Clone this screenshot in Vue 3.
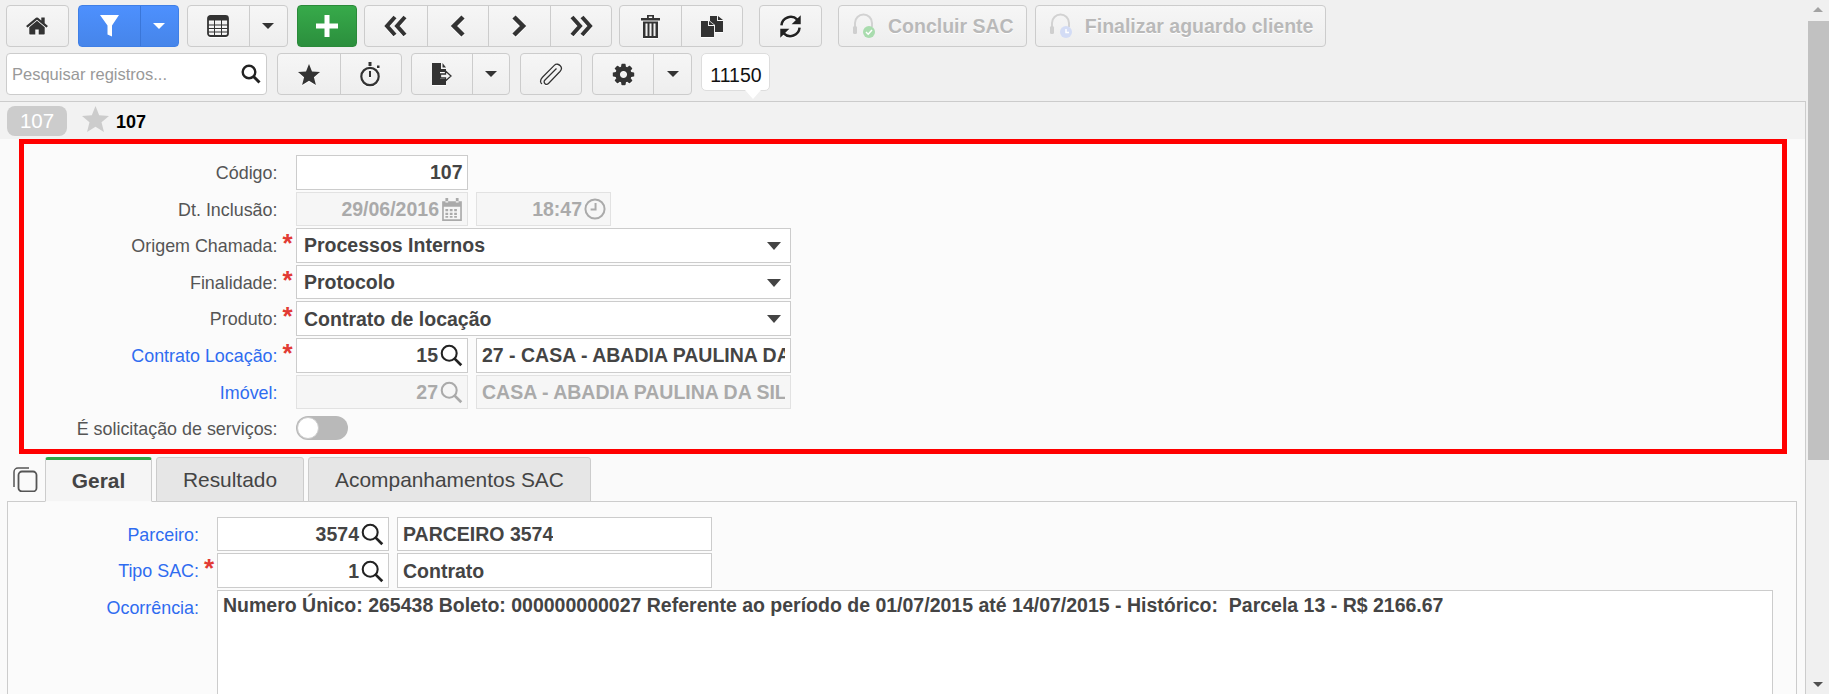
<template>
  <div class="app">
    <div class="main">
      <div class="toolbar">
        <div class="tool-row">
          <div class="group g-home">
            <button class="btn w62">
              <svg class="ico" width="24" height="24" viewBox="0 0 1792 1792"><path d="M1472 992v480q0 26-19 45t-45 19h-384v-384h-256v384h-384q-26 0-45-19t-19-45v-480q0-1 .5-3t.5-3l575-474 575 474q1 2 1 6zm223-69l-62 74q-8 9-21 11h-3q-13 0-21-7l-692-577-692 577q-12 8-24 7-13-2-21-11l-62-74q-8-10-7-23.500t11-21.500l719-599q32-26 76-26t76 26l244 204v-195q0-14 9-23t23-9h192q14 0 23 9t9 23v408l219 182q10 8 11 21.500t-7 23.500z"/></svg>
            </button>
          </div>
          <div class="group blue g-filter">
            <button class="btn w62">
              <svg width="19" height="22" viewBox="0 0 19 22"><path d="M0 0h19l-7 10.500v11l-4.500-2v-9z" fill="#fff"/></svg>
            </button>
            <button class="btn w39"><span class="caret white"></span></button>
          </div>
          <div class="group g-table">
            <button class="btn w62">
              <svg class="ico" width="22" height="22" viewBox="0 0 22 22"><rect x="1" y="1" width="20" height="20" rx="2.500" fill="none" stroke="#333" stroke-width="1.800"/><rect x="1" y="1" width="20" height="4.500" fill="#333"/><path d="M1 10h20M1 13.500h20M1 17h20M7.500 5v16M14.500 5v16" stroke="#333" stroke-width="1"/></svg>
            </button>
            <button class="btn w39"><span class="caret"></span></button>
          </div>
          <div class="group green g-add">
            <button class="btn w60">
              <svg width="22" height="22" viewBox="0 0 22 22"><path d="M8.500 0h5v8.500H22v5h-8.500V22h-5v-8.500H0v-5h8.500z" fill="#fff"/></svg>
            </button>
          </div>
          <div class="group g-nav">
            <button class="btn n1">
              <svg class="ico" width="24" height="22" viewBox="0 0 24 22"><path d="M11 2 3 11l8 9M21 2l-8 9 8 9" fill="none" stroke="#333" stroke-width="4"/></svg>
            </button>
            <button class="btn n2">
              <svg class="ico" width="15" height="22" viewBox="0 0 15 22"><path d="M13 2 4 11l9 9" fill="none" stroke="#333" stroke-width="4.500"/></svg>
            </button>
            <button class="btn n3">
              <svg class="ico" width="15" height="22" viewBox="0 0 15 22"><path d="m2 2 9 9-9 9" fill="none" stroke="#333" stroke-width="4.500"/></svg>
            </button>
            <button class="btn n4">
              <svg class="ico" width="24" height="22" viewBox="0 0 24 22"><path d="m3 2 8 9-8 9M13 2l8 9-8 9" fill="none" stroke="#333" stroke-width="4"/></svg>
            </button>
          </div>
          <div class="group g-trash">
            <button class="btn w61">
              <svg class="ico" width="19" height="24" viewBox="0 0 19 24"><path d="M0 4h19v2.500H0zM6 4V1h7v3h-1.800V2.500H7.800V4zM2 7.500h15V24H2zm2.500 2v12.500h2V9.500zm4 0v12.500h2V9.500zm4 0v12.500h2V9.500z" fill="#333" fill-rule="evenodd"/></svg>
            </button>
            <button class="btn w61">
              <svg class="ico" width="22" height="22" viewBox="0 0 22 22"><path d="M0 6h7v5h6v11H0zM8 6l5 4H8zM9 1h7v5h6v11h-8v-7l-5-4zm8 0 5 4h-5z" fill="#333"/></svg>
            </button>
          </div>
          <div class="group g-refresh">
            <button class="btn w62">
              <svg class="ico" width="25" height="25" viewBox="0 0 22 22"><path d="M3 10a8.200 8.200 0 0 1 14-5M19 12a8.200 8.200 0 0 1-14 5" fill="none" stroke="#222" stroke-width="2.200"/><path d="M20 1v8h-8zM2 21v-8h8z" fill="#222"/></svg>
            </button>
          </div>
          <div class="group g-sac">
            <button class="btn text-btn w187" disabled>
              <svg width="24" height="26" viewBox="0 0 24 26"><path d="M3 15V10a8.500 8.500 0 0 1 17 0v4" fill="none" stroke="#d2d2d2" stroke-width="2"/><rect x="1" y="13" width="4" height="8" rx="1.500" fill="#cfcfcf"/><circle cx="17" cy="19" r="6" fill="#a9dcae"/><path d="m14 19 2.200 2.200L20 17" fill="none" stroke="#fff" stroke-width="1.500"/></svg>
              <span>Concluir SAC</span>
            </button>
          </div>
          <div class="group g-fin">
            <button class="btn text-btn w290" disabled>
              <svg width="24" height="26" viewBox="0 0 24 26"><path d="M3 15V10a8.500 8.500 0 0 1 17 0v4" fill="none" stroke="#d2d2d2" stroke-width="2"/><rect x="1" y="13" width="4" height="8" rx="1.500" fill="#cfcfcf"/><circle cx="17" cy="19" r="6" fill="#d3dcf5"/><path d="M17 16v3.500h3" fill="none" stroke="#fff" stroke-width="1.500"/></svg>
              <span>Finalizar aguardo cliente</span>
            </button>
          </div>
        </div>
        <div class="tool-row">
          <div class="search-box">
            <span class="placeholder">Pesquisar registros...</span>
            <svg width="20" height="20" viewBox="0 0 20 20"><circle cx="8" cy="8" r="6.300" fill="none" stroke="#222" stroke-width="2.400"/><path d="m12.500 12.500 6 6" stroke="#222" stroke-width="3"/></svg>
          </div>
          <div class="group g-star">
            <button class="btn w61h">
              <svg class="ico" width="22" height="21" viewBox="0 0 22 21"><path d="m11 0 3 7.500 8 .6-6.100 5.100 2 7.800L11 16.800 4.100 21l2-7.800L0 8.100l8-.6z" fill="#333"/></svg>
            </button>
            <button class="btn w61h">
              <svg class="ico" width="21" height="25" viewBox="0 0 21 25"><circle cx="10" cy="14.500" r="8.700" fill="none" stroke="#333" stroke-width="2.200"/><path d="M10 9v6" stroke="#333" stroke-width="2"/><rect x="8.500" y="0" width="3" height="4" fill="#333"/><rect x="17" y="3.500" width="2.500" height="2.500" fill="#333"/></svg>
            </button>
          </div>
          <div class="group g-export">
            <button class="btn w62">
              <svg class="ico" width="20" height="22" viewBox="0 0 20 22"><path d="M0 0h9v6h5v3H8v7h6v6H0zM10.500 0l3.500 4.500h-3.500z" fill="#333"/><path d="M8.500 11h5V8l5.500 5-5.500 5v-3h-5z" fill="#f2f2f2" stroke="#333" stroke-width="1.300"/></svg>
            </button>
            <button class="btn w38"><span class="caret"></span></button>
          </div>
          <div class="group g-clip">
            <button class="btn w62">
              <svg class="ico" width="24" height="24" viewBox="0 0 24 24"><path d="M17.500 6.500 6 18c-1.500 1.500-.8 3 0 3.700s2.300 1 3.500-.2L21 9.500c2-2.200 1.500-4.500.2-5.800S17.500 1.200 15.300 3.400L3.500 15.300C.5 18.500 1.500 21 3 22" fill="none" stroke="#333" stroke-width="1.300"/></svg>
            </button>
          </div>
          <div class="group g-gear">
            <button class="btn w62">
              <svg class="ico" width="25" height="25" viewBox="0 0 1792 1792"><path d="M1152 896q0-106-75-181t-181-75-181 75-75 181 75 181 181 75 181-75 75-181zm512-109v222q0 12-8 23t-20 13l-185 28q-19 54-39 91 35 50 107 138 10 12 10 25t-9 23q-27 37-99 108t-94 71q-12 0-26-9l-138-108q-44 23-91 38-16 136-29 186-7 28-36 28h-222q-14 0-24.500-8.500t-11.500-21.500l-28-184q-49-16-90-37l-141 107q-10 9-25 9-14 0-25-11-126-114-165-168-7-10-7-23 0-12 8-23 15-21 51-66.500t54-70.500q-27-50-41-99l-183-27q-13-2-21-12.500t-8-23.500v-222q0-12 8-23t19-13l186-28q14-46 39-92-40-57-107-138-10-12-10-24 0-10 9-23 26-36 98.500-107.500t94.500-71.500q13 0 26 10l138 107q44-23 91-38 16-136 29-186 7-28 36-28h222q14 0 24.500 8.500t11.500 21.500l28 184q49 16 90 37l142-107q9-9 24-9 13 0 25 10 129 119 165 170 7 8 7 22 0 12-8 23-15 21-51 66.500t-54 70.500q26 50 41 98l183 28q13 2 21 12.500t8 23.500z"/></svg>
            </button>
            <button class="btn w39"><span class="caret"></span></button>
          </div>
          <div class="tooltip">11150</div>
        </div>
      </div>

      <div class="panel">
        <div class="record-head">
          <span class="badge">107</span>
          <svg class="head-star" width="27" height="26" viewBox="0 0 22 21"><path d="m11 0 3 7.500 8 .6-6.100 5.100 2 7.800L11 16.800 4.100 21l2-7.800L0 8.100l8-.6z" fill="#ccc"/></svg>
          <span class="record-title">107</span>
        </div>

        <section class="form">
          <div class="row">
            <label class="lbl">Código:</label>
            <div class="field f172 right plain strong">107</div>
          </div>
          <div class="row">
            <label class="lbl">Dt. Inclusão:</label>
            <div class="field f172 right off">
              29/06/2016
              <svg class="addon" width="22" height="23" viewBox="0 0 20 21"><path d="M1 3h18v18H1zm1.500 5v11.500h15V8zM4 0h2.500v4H4zm9.500 0H16v4h-2.500zM4 10h2.500v2H4zm4 0h2.500v2H8zm4 0h2.500v2H12zm-8 3.500h2.500v2H4zm4 0h2.500v2H8zm4 0h2.500v2H12zm-8 3h2.500v1.500H4zm4 0h2.500v1.500H8zm4 0h2.500v1.500H12z" fill="#aaa" fill-rule="evenodd"/></svg>
            </div>
            <div class="field f135 right off">
              18:47
              <svg class="addon" width="22" height="22" viewBox="0 0 20 20"><circle cx="10" cy="10" r="8.700" fill="none" stroke="#aaa" stroke-width="1.800"/><path d="M10.500 4.500v6H6" fill="none" stroke="#aaa" stroke-width="1.800"/></svg>
            </div>
          </div>
          <div class="row">
            <label class="lbl">Origem Chamada:</label><span class="req">*</span>
            <div class="field f494 select strong">Processos Internos<span class="caret big"></span></div>
          </div>
          <div class="row">
            <label class="lbl">Finalidade:</label><span class="req">*</span>
            <div class="field f494 select strong">Protocolo<span class="caret big"></span></div>
          </div>
          <div class="row">
            <label class="lbl">Produto:</label><span class="req">*</span>
            <div class="field f494 select strong">Contrato de locação<span class="caret big"></span></div>
          </div>
          <div class="row">
            <label class="lbl link">Contrato Locação:</label><span class="req">*</span>
            <div class="field f172 right strong">
              15
              <svg class="addon" width="23" height="23" viewBox="0 0 20 20"><circle cx="8" cy="8" r="6.500" fill="none" stroke="#222" stroke-width="1.800"/><path d="m12.500 12.500 6 6" stroke="#222" stroke-width="2.400"/></svg>
            </div>
            <div class="field f314 clip strong"><span class="clip-text">27 - CASA - ABADIA PAULINA DA SILVA</span></div>
          </div>
          <div class="row">
            <label class="lbl link">Imóvel:</label>
            <div class="field f172 right off">
              27
              <svg class="addon" width="23" height="23" viewBox="0 0 20 20"><circle cx="8" cy="8" r="6.500" fill="none" stroke="#aaa" stroke-width="1.800"/><path d="m12.500 12.500 6 6" stroke="#aaa" stroke-width="2.400"/></svg>
            </div>
            <div class="field f314 clip off"><span class="clip-text">CASA - ABADIA PAULINA DA SILVA</span></div>
          </div>
          <div class="row">
            <label class="lbl">É solicitação de serviços:</label>
            <div class="switch"><span class="knob"></span></div>
          </div>
        </section>

        <div class="tabs">
          <svg class="copy-ico" width="25" height="25" viewBox="0 0 25 25"><path d="M4 20V5a4 4 0 0 1 4-4h11" fill="none" stroke="#555" stroke-width="1.500" transform="translate(-3 0)"/><rect x="5.500" y="4.500" width="18" height="20" rx="3.500" fill="none" stroke="#555" stroke-width="1.800"/></svg>
          <div class="tab active">Geral</div>
          <div class="tab t-res">Resultado</div>
          <div class="tab t-acomp">Acompanhamentos SAC</div>
        </div>

        <div class="tab-body">
          <div class="row inner">
            <label class="lbl link">Parceiro:</label>
            <div class="field f172 right strong">
              3574
              <svg class="addon" width="23" height="23" viewBox="0 0 20 20"><circle cx="8" cy="8" r="6.500" fill="none" stroke="#222" stroke-width="1.800"/><path d="m12.500 12.500 6 6" stroke="#222" stroke-width="2.400"/></svg>
            </div>
            <div class="field f314 clip strong"><span class="clip-text">PARCEIRO 3574</span></div>
          </div>
          <div class="row inner">
            <label class="lbl link">Tipo SAC:</label><span class="req">*</span>
            <div class="field f172 right strong">
              1
              <svg class="addon" width="23" height="23" viewBox="0 0 20 20"><circle cx="8" cy="8" r="6.500" fill="none" stroke="#222" stroke-width="1.800"/><path d="m12.500 12.500 6 6" stroke="#222" stroke-width="2.400"/></svg>
            </div>
            <div class="field f314 clip strong"><span class="clip-text">Contrato</span></div>
          </div>
          <div class="row inner tall">
            <label class="lbl link">Ocorrência:</label>
            <div class="field area strong">Numero Único: 265438 Boleto: 000000000027 Referente ao período de 01/07/2015 até 14/07/2015 - Histórico:&nbsp; Parcela 13 - R$ 2166.67</div>
          </div>
        </div>
      </div>
    </div>
    <div class="scrollbar">
      <span class="arrow up"></span>
      <div class="thumb"></div>
      <span class="arrow down"></span>
    </div>
  </div>
</template>

<script setup>
</script>

<style>
html, body {
  margin: 0;
  overflow: hidden;
  background: #f0f0f0;
}
</style>

<style scoped>
.app {
  display: flex;
  height: 694px;
  overflow: hidden;
  font-family: "Liberation Sans", Arial, sans-serif;
  color: #444;
  background: #f0f0f0;
}

.main {
  flex: 1;
  min-width: 0;
}

/* barra de ferramentas */
.toolbar {
  height: 101px;
  padding: 5px 0 0 6px;
  box-sizing: border-box;
}

.tool-row {
  display: flex;
  height: 42px;
  margin-bottom: 6px;
}

.group {
  display: flex;
  flex: none;
  height: 42px;
  box-sizing: border-box;
  border: 1px solid #ccc;
  border-radius: 4px;
  overflow: hidden;
  background: linear-gradient(#f6f6f6, #eeeeee);
}

.g-filter { margin-left: 9.300px; }
.g-table { margin-left: 8.300px; }
.g-add { margin-left: 9.300px; }
.g-nav { margin-left: 7px; }
.g-trash { margin-left: 7.300px; }
.g-refresh { margin-left: 16px; }
.g-sac { margin-left: 16.400px; }
.g-fin { margin-left: 7.800px; }
.g-star { margin-left: 10px; }
.g-export { margin-left: 8.800px; }
.g-clip, .g-gear { margin-left: 9.300px; }

.blue {
  border-color: #3f7fe6;
  background: linear-gradient(#4d90fe, #4685ea);
}

.green {
  border-color: #2b8a3a;
  background: linear-gradient(#37aa4a, #2b8f3d);
}

.btn {
  display: flex;
  align-items: center;
  justify-content: center;
  flex: none;
  height: 100%;
  padding: 0;
  border: 0;
  border-left: 1px solid #ccc;
  background: transparent;
  font: inherit;
}

.btn:first-child { border-left: 0; }
.blue .btn { border-left-color: #3a76d8; }

.w60 { width: 58px; }
.w62 { width: 60.700px; }
.w61 { width: 61px; }
.w61h { width: 61.500px; }
.w39 { width: 38px; }
.w38 { width: 37px; }
.w187 { width: 187px; }
.w290 { width: 289.500px; }
.n1 { width: 61.700px; }
.n2 { width: 61px; }
.n3 { width: 62px; }
.n4 { width: 61px; }

.ico {
  filter: drop-shadow(0 1px 0 #fff);
  fill: #333;
}

.text-btn {
  gap: 12px;
  justify-content: flex-start;
  padding-left: 13px;
  color: #b9b9b9;
  font-size: 19.500px;
  font-weight: bold;
  text-shadow: 0 1px 0 #fff;
}

.caret {
  display: inline-block;
  width: 0;
  height: 0;
  border-left: 6px solid transparent;
  border-right: 6px solid transparent;
  border-top: 6px solid #333;
}

.caret.white { border-top-color: #fff; }

.caret.big {
  border-left-width: 7px;
  border-right-width: 7px;
  border-top: 8px solid #444;
}

.search-box {
  display: flex;
  align-items: center;
  justify-content: space-between;
  flex: none;
  width: 261px;
  height: 42px;
  padding: 0 5px 0 5px;
  box-sizing: border-box;
  border: 1px solid #ccc;
  border-radius: 4px;
  background: #fff;
}

.placeholder {
  color: #999;
  font-size: 16.500px;
}

.tooltip {
  position: relative;
  flex: none;
  width: 69px;
  height: 38px;
  margin-left: 9px;
  box-sizing: border-box;
  border: 1px solid #ddd;
  border-radius: 5px;
  background: #fff;
  color: #111;
  font-size: 19.500px;
  line-height: 42px;
  text-align: center;
}

.tooltip::after {
  content: "";
  position: absolute;
  left: 43px;
  bottom: -9px;
  width: 0;
  height: 0;
  border-left: 8px solid transparent;
  border-right: 8px solid transparent;
  border-top: 9px solid #fff;
}

/* painel do registro */
.panel {
  margin-right: 2px;
  height: 593px;
  border-top: 1px solid #ccc;
  border-right: 1px solid #ccc;
  background: #fafafa;
  overflow: hidden;
}

.record-head {
  display: flex;
  align-items: center;
  height: 37px;
  padding-left: 7px;
  box-sizing: border-box;
  background: #f2f2f2;
}

.badge {
  width: 60px;
  height: 30px;
  margin-right: 14px;
  border-radius: 8px;
  background: #ccc;
  color: #fff;
  font-size: 20.500px;
  line-height: 30px;
  text-align: center;
}

.head-star { margin: -4px 0 0 1px; }

.record-title {
  margin: 3px 0 0 7px;
  color: #000;
  font-size: 18px;
  font-weight: bold;
}

.form {
  margin: 0 18px 0 19px;
  padding: 11px 0 6px;
  height: 315px;
  box-sizing: border-box;
  border: 5px solid #f00;
  background: #fbfbfb;
}

.row {
  display: flex;
  align-items: flex-start;
  height: 34.600px;
  margin-bottom: 2px;
  font-size: 16px;
}

.lbl {
  width: 253.500px;
  flex: none;
  padding-top: 1px;
  color: #555;
  font-size: 17.900px;
  line-height: 34px;
  text-align: right;
  white-space: nowrap;
}

.link { color: #2f6cf0; }

.req {
  position: relative;
  width: 0;
  color: #e23a34;
  font-size: 26px;
  font-weight: bold;
  line-height: 34px;
  left: 5px;
  top: -2px;
}

.field {
  display: flex;
  align-items: center;
  flex: none;
  height: 34.600px;
  margin-left: 18.500px;
  padding: 1px 5px 0;
  box-sizing: border-box;
  border: 1px solid #ccc;
  background: #fff;
  font-size: 18.200px;
  white-space: nowrap;
}

.field + .field { margin-left: 8px; }

.f172 { width: 172px; }
.f135 { width: 135px; }
.f494 { width: 495px; }
.f314 { width: 314.500px; }

.right { justify-content: flex-end; padding-right: 4px; }
.right.plain { padding-right: 4.500px; }
.strong { font-weight: bold; color: #444; font-size: 19.500px; }
.off { background: #f6f6f6; border-color: #e2e2e2; color: #aaa; font-weight: bold; font-size: 19.500px; }
.select { justify-content: space-between; padding: 1px 9px 0 7px; }
.clip-text { overflow: hidden; min-width: 0; }
.addon { margin-left: 2px; flex: none; }

.switch {
  position: relative;
  width: 52px;
  height: 24px;
  margin: 5px 0 0 18.500px;
  border-radius: 12px;
  background: #b9b9b9;
}

.knob {
  position: absolute;
  top: 1px;
  left: 1px;
  width: 20px;
  height: 20px;
  border: 1px solid #ccc;
  border-radius: 50%;
  background: #fff;
}

/* abas */
.tabs {
  display: flex;
  align-items: flex-end;
  height: 45px;
  margin-top: 3px;
  padding-left: 13px;
  position: relative;
  z-index: 1;
  margin-bottom: -1px;
}

.copy-ico {
  margin: 0 7px 10px 0;
  flex: none;
}

.tab {
  height: 45px;
  box-sizing: border-box;
  margin-right: 4px;
  border: 1px solid #ccc;
  border-radius: 3px 3px 0 0;
  background: #e6e6e6;
  color: #444;
  font-size: 20.900px;
  line-height: 44px;
  text-align: center;
}

.tab.active {
  width: 107px;
  border-top: 3px solid #2ea84a;
  border-bottom-color: #fafafa;
  background: #f5f5f5;
  font-weight: bold;
  line-height: 42px;
}

.t-res { width: 148px; }
.t-acomp { width: 283px; }

.tab-body {
  height: 300px;
  margin: 0 8px 0 7px;
  padding-top: 14.500px;
  box-sizing: border-box;
  border: 1px solid #ccc;
  background: #fbfbfb;
}

.inner { margin-bottom: 2.200px; }
.inner .lbl { width: 191px; }
.inner .field:first-of-type { margin-left: 18px; }

.area {
  align-items: flex-start;
  width: 1556px;
  height: 200px;
  padding: 3px 5px;
  white-space: pre-wrap;
}

.tall { height: 200px; }

/* barra de rolagem */
.scrollbar {
  position: relative;
  flex: none;
  width: 21px;
  background: #f0f0f0;
}

.thumb {
  height: 439px;
  margin-top: 21px;
  background: #c1c1c1;
}

.arrow {
  position: absolute;
  left: 5px;
  width: 0;
  height: 0;
  border-left: 5.500px solid transparent;
  border-right: 5.500px solid transparent;
}

.arrow.up {
  top: 7px;
  border-bottom: 5px solid #a3a3a3;
}

.arrow.down {
  bottom: 7px;
  border-top: 5px solid #505050;
}
</style>
